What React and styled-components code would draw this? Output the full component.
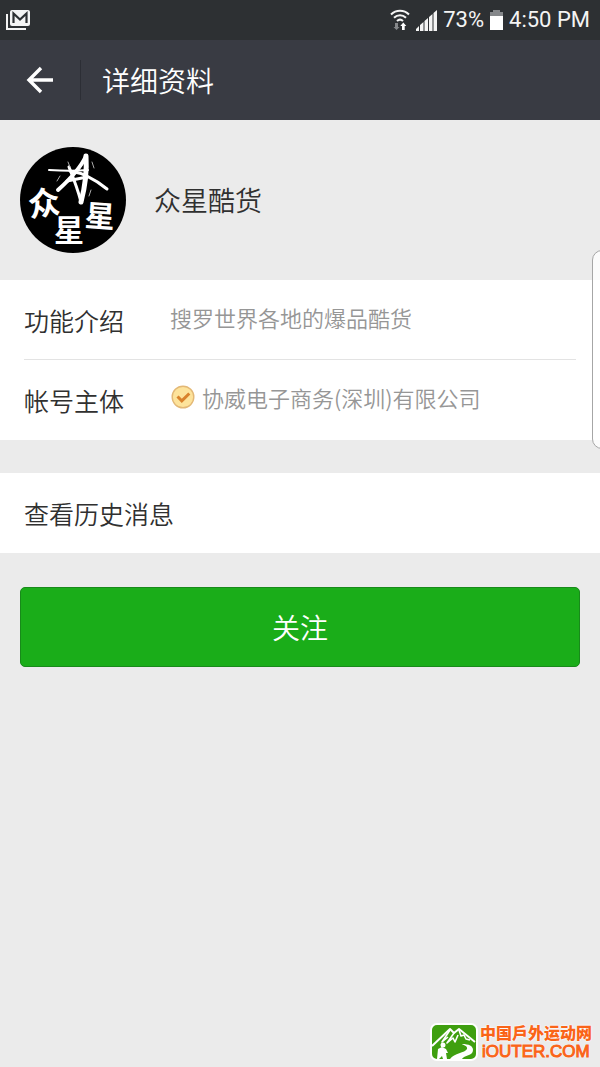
import React, { useState } from "react";
import styled, { createGlobalStyle } from "styled-components";

const colors = {
  status: "#2d3033",
  header: "#393b43",
  page: "#ebebeb",
  line: "#e3e3e3",
  text: "#303030",
  muted: "#969696",
  green: "#1aad19",
  greenDark: "#188a1a",
  orange: "#fa6418",
};

const GlobalStyle = createGlobalStyle`
  * {
    box-sizing: border-box;
  }
  body {
    margin: 0;
    background: ${colors.page};
    color: ${colors.text};
    font-family: "Noto Sans CJK SC", sans-serif;
    font-weight: 350;
  }
  h1, h2, dl, dt, dd, p {
    margin: 0;
    font-weight: inherit;
  }
`;

const Page = styled.div`
  position: relative;
  min-height: 100vh;
  overflow: hidden;
`;

const StatusBar = styled.div`
  display: flex;
  align-items: center;
  justify-content: space-between;
  height: 40px;
  padding: 0 10px 0 6px;
  background: ${colors.status};
  color: #f4f4f4;
  font-family: Roboto, sans-serif;
  font-size: 22px;
  font-weight: 400;
  line-height: 40px;

  svg {
    display: block;
  }
`;

const StatusGroup = styled.div`
  display: flex;
  align-items: center;
  gap: 6px;
`;

const Header = styled.header`
  display: flex;
  align-items: center;
  height: 80px;
  background: ${colors.header};
  color: #fff;
`;

const BackButton = styled.button`
  display: flex;
  align-items: center;
  justify-content: center;
  width: 81px;
  height: 40px;
  padding: 0;
  border: 0;
  border-right: 1px solid #2c2e35;
  background: none;
  color: inherit;
`;

const Title = styled.h1`
  padding-left: 21px;
  font-size: 28px;
  line-height: 40px;
`;

const Profile = styled.section`
  display: flex;
  align-items: center;
  gap: 26px;
  height: 160px;
  padding: 0 20px;
`;

const Name = styled.h2`
  font-size: 27px;
  line-height: 40px;
`;

const Panel = styled.section`
  margin-bottom: 34px;
  padding: 0 24px;
  background: #fff;
`;

const InfoList = styled.dl`
  && {
    margin-bottom: 33px;
  }
  padding: 0 24px;
  background: #fff;
`;

const InfoRow = styled.div`
  display: flex;
  align-items: center;
  height: 80px;

  &:not(:last-child) {
    border-bottom: 1px solid ${colors.line};
  }
`;

const Label = styled.dt`
  flex: none;
  width: 146px;
  font-size: 25px;
  line-height: 40px;
`;

const Value = styled.dd`
  display: flex;
  align-items: center;
  gap: 6px;
  padding-bottom: 6px;
  color: ${colors.muted};
  font-size: 22px;
  line-height: 32px;
`;

const HistoryLink = styled.a`
  display: block;
  color: inherit;
  font-size: 25px;
  line-height: 80px;
  text-decoration: none;
`;

const FollowArea = styled.div`
  padding: 0 20px;
`;

const FollowButton = styled.button`
  display: block;
  width: 100%;
  height: 80px;
  border: 1px solid ${colors.greenDark};
  border-radius: 5px;
  background: ${colors.green};
  color: #fff;
  font-family: inherit;
  font-size: 28px;
  font-weight: inherit;
`;

// edge panel handle hanging over the right side of the screen
const EdgeHandle = styled.div`
  position: absolute;
  top: 250px;
  right: -12px;
  width: 20px;
  height: 199px;
  border: 1px solid #a6a6a6;
  border-radius: 10px;
  background: rgba(255, 255, 255, 0.8);
`;

const Watermark = styled.div`
  position: absolute;
  right: 8px;
  bottom: 6px;
  display: flex;
  align-items: center;
  gap: 2px;
  color: ${colors.orange};
`;

const WatermarkText = styled.div`
  font-family: "Liberation Sans", "Noto Sans CJK SC", sans-serif;
  text-shadow: 0 0 2px #fff, 0 0 2px #fff;
`;

const SiteName = styled.p`
  && {
    font-weight: 900;
  }
  font-size: 16px;
  line-height: 19px;
`;

const SiteUrl = styled.p`
  padding-left: 2px;
  font-size: 17px;
  line-height: 18px;
  -webkit-text-stroke: 1px ${colors.orange};
`;

const MailIcon = () => (
  <svg width="24" height="22" viewBox="0 0 24 22" fill="none" aria-hidden="true">
    <path d="M1 5v15h19" stroke="#f4f4f4" strokeWidth="2" />
    <rect x="4" y="1" width="20" height="16" rx="2" fill="#f4f4f4" />
    <path d="M7.5 14V4.5l6.5 6 6.5-6V14" stroke={colors.status} strokeWidth="2.2" />
  </svg>
);

const WifiIcon = () => (
  <svg width="20" height="22" viewBox="0 0 20 22" fill="none" aria-hidden="true">
    <g stroke="#f4f4f4" strokeWidth="2">
      <path d="M1 5.5C6 .5 14 .5 19 5.5" />
      <path d="M4 8.8c3.5-3.5 8.5-3.5 12 0" />
      <path d="M7 12c2-1.8 4-1.8 6 0" />
    </g>
    <path d="M5 14h3v4h1.5l-3 3-3-3H5z" fill="#85878a" />
    <path d="M12 21v-4h-1.7l3-3.5 3 3.5h-1.6v4z" fill="#fff" />
  </svg>
);

const SignalIcon = () => (
  <svg width="21" height="21" viewBox="0 0 21 21" fill="#f4f4f4" aria-hidden="true">
    <path d="M0 21v-2l3-3v5zM4 21v-6l3.5-3v9zM8.5 21V11l3.5-3v13zM13 21V7l3.5-3v17zM17.5 21V3L21 0v21z" />
  </svg>
);

const BatteryIcon = () => (
  <svg width="13" height="20" viewBox="0 0 13 20" aria-hidden="true">
    <path d="M0 2h3V0h7v2h3v5H0z" fill="#85878a" />
    <path d="M0 6h13v14H0z" fill="#fff" />
  </svg>
);

const BackIcon = () => (
  <svg width="28" height="28" viewBox="0 0 28 28" fill="none" aria-hidden="true">
    <path d="M15 2L3 14l12 12M3 14h24" stroke="#fff" strokeWidth="3.4" />
  </svg>
);

const VerifiedIcon = () => (
  <svg width="26" height="26" viewBox="0 0 26 26" fill="none" aria-hidden="true">
    <circle cx="13" cy="13" r="10.8" fill="#fde39b" stroke="#e3b876" strokeWidth="1.4" />
    <path d="M7.5 12.5l4.3 4.3 7.5-7.3" stroke="#d9822b" strokeWidth="3" />
  </svg>
);

const Avatar = () => (
  <svg width="108" height="108" viewBox="0 0 108 108" role="img" aria-label="众星星">
    <circle cx="53" cy="54" r="53" fill="#000" />
    <g fill="none" stroke="#fff" strokeLinecap="round" strokeLinejoin="round">
      <path d="M38 44C48 35 60 23 66 10" strokeWidth="4" />
      <path d="M66 10c1 15-1 31-5 46" strokeWidth="5" />
      <path d="M61 56C58 44 53 31 49 21" strokeWidth="3" />
      <path d="M29 24c14 1 29 1 39 0" strokeWidth="2" />
      <path d="M50 25c14 2 26 9 37 18" strokeWidth="3" />
      <path d="M47 35l20-4" strokeWidth="3" />
      <path d="M37 35l3-5M69 50l2-6M72 16l2 6M48 16l2 5" strokeWidth="1" stroke="#aaa" />
    </g>
    <g
      fill="#fff"
      fontFamily="'Noto Sans CJK SC', sans-serif"
      fontWeight="700"
      textAnchor="middle"
    >
      <text x="24" y="69" fontSize="32" transform="rotate(-8 24 58)">众</text>
      <text x="49" y="95" fontSize="30">星</text>
      <text x="80" y="81" fontSize="30" transform="rotate(4 80 70)">星</text>
    </g>
  </svg>
);

const MountainLogo = () => (
  <svg width="48" height="38" viewBox="0 0 48 38" fill="none" aria-hidden="true">
    <rect x="1" y="1" width="46" height="36" rx="6" fill="#3f9f0f" stroke="#fff" strokeWidth="2" />
    <g stroke="#fff" strokeWidth="2" strokeLinejoin="round">
      <path d="M2 23L20 6l4 4 5-4 16 13" />
      <path d="M20 7l-8 12 6-5M24 10l-7 10 6-5 2 4 3-7M29 7l2 6 3-1 2 4 4 1" strokeWidth="1.6" />
    </g>
    <path
      d="M20 36c4-6 15-6 17-10 1-3-4-4-5-5 7 0 11 2 11 6 0 6-9 5-11 9z"
      fill="#fff"
    />
    <circle cx="13" cy="22" r="2.5" fill="#fff" />
    <path d="M8 26l4-2 4 2 2 4h-2l1 6h-4l-1-3-3 3H7z" fill="#fff" />
  </svg>
);

const App = () => {
  const [following, setFollowing] = useState(false);

  return (
    <Page>
      <GlobalStyle />
      <StatusBar>
        <MailIcon />
        <StatusGroup>
          <WifiIcon />
          <SignalIcon />
          <span>73%</span>
          <BatteryIcon />
          <span>4:50 PM</span>
        </StatusGroup>
      </StatusBar>
      <Header>
        <BackButton type="button" aria-label="返回">
          <BackIcon />
        </BackButton>
        <Title>详细资料</Title>
      </Header>
      <main>
        <Profile>
          <Avatar />
          <Name>众星酷货</Name>
        </Profile>
        <InfoList>
          <InfoRow>
            <Label>功能介绍</Label>
            <Value>搜罗世界各地的爆品酷货</Value>
          </InfoRow>
          <InfoRow>
            <Label>帐号主体</Label>
            <Value>
              <VerifiedIcon />
              协威电子商务(深圳)有限公司
            </Value>
          </InfoRow>
        </InfoList>
        <Panel>
          <HistoryLink href="#history">查看历史消息</HistoryLink>
        </Panel>
        <FollowArea>
          <FollowButton
            type="button"
            aria-pressed={following}
            onClick={() => setFollowing(!following)}
          >
            关注
          </FollowButton>
        </FollowArea>
      </main>
      <EdgeHandle />
      <Watermark>
        <MountainLogo />
        <WatermarkText>
          <SiteName>中国戶外运动网</SiteName>
          <SiteUrl>iOUTER.COM</SiteUrl>
        </WatermarkText>
      </Watermark>
    </Page>
  );
};

export default App;
